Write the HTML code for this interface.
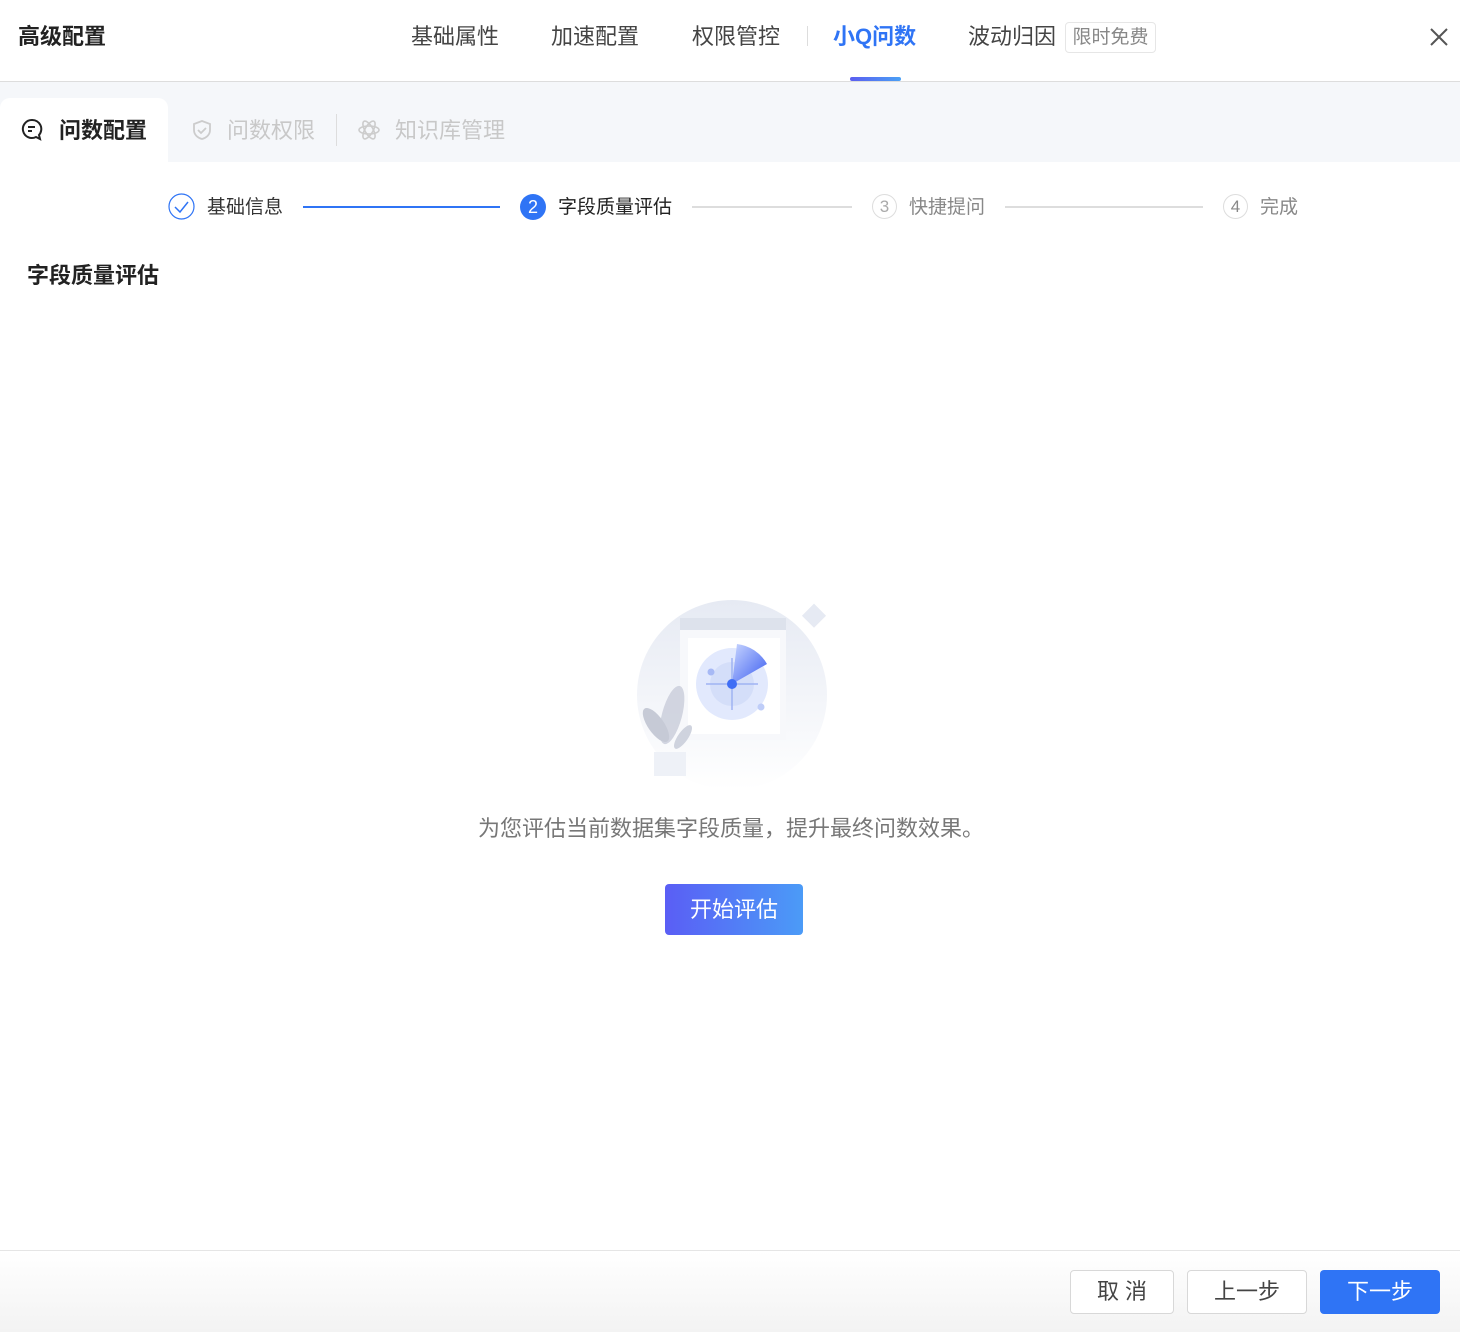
<!DOCTYPE html>
<html><head><meta charset="utf-8"><style>
*{margin:0;padding:0;box-sizing:border-box}
body{width:1460px;height:1332px;background:#fff;font-family:"Liberation Sans","Noto Sans CJK SC",sans-serif;position:relative;overflow:hidden;color:#333}
.a{position:absolute;white-space:nowrap}
</style></head><body>
<div class="a" style="left:18px;top:22px;font-size:22px;font-weight:bold;color:#222;line-height:30px">高级配置</div>
<div class="a" style="left:411px;top:22px;font-size:22px;color:#444;line-height:30px">基础属性</div>
<div class="a" style="left:551px;top:22px;font-size:22px;color:#444;line-height:30px">加速配置</div>
<div class="a" style="left:692px;top:22px;font-size:22px;color:#444;line-height:30px">权限管控</div>
<div class="a" style="left:807px;top:26px;width:1px;height:20px;background:#ddd"></div>
<div class="a" style="left:833px;top:22px;font-size:22px;color:#2f74f5;line-height:30px;font-weight:bold">小Q问数</div>
<div class="a" style="left:850px;top:77px;width:51px;height:4px;border-radius:2px;background:linear-gradient(90deg,#5b5ef0,#4aa0f5)"></div>
<div class="a" style="left:968px;top:22px;font-size:22px;color:#444;line-height:30px">波动归因</div>
<div class="a" style="left:1065px;top:22px;width:91px;height:31px;border:1px solid #e6e6e6;border-radius:4px;font-size:19px;color:#888;line-height:29px;text-align:center">限时免费</div>
<svg class="a" style="left:1428px;top:26px" width="22" height="22" viewBox="0 0 22 22"><path d="M3 3L19 19M19 3L3 19" stroke="#555" stroke-width="2"/></svg>
<div class="a" style="left:0;top:81px;width:1460px;height:1px;background:#ddd"></div>
<div class="a" style="left:0;top:82px;width:1460px;height:80px;background:#f5f7fa"></div>
<div class="a" style="left:0;top:98px;width:168px;height:64px;background:#fff;border-radius:10px 10px 0 0"></div>
<svg class="a" style="left:20px;top:117px" width="26" height="26" viewBox="0 0 26 26"><path d="M12 3a9 9 0 1 0 4 17l4 2-1-4a9 9 0 0 0-7-15z" fill="none" stroke="#222" stroke-width="2"/><path d="M8 10h7M8 14h4" stroke="#222" stroke-width="2"/></svg>
<div class="a" style="left:59px;top:116px;font-size:22px;font-weight:bold;color:#222;line-height:30px">问数配置</div>
<svg class="a" style="left:191px;top:119px" width="22" height="22" viewBox="0 0 22 22"><path d="M11 2l8 3v6c0 5-4 8-8 9-4-1-8-4-8-9V5z" fill="none" stroke="#ccc" stroke-width="1.8"/><path d="M7 11l3 3 5-5" fill="none" stroke="#ccc" stroke-width="1.8"/></svg>
<div class="a" style="left:227px;top:116px;font-size:22px;color:#c8c8c8;line-height:30px">问数权限</div>
<div class="a" style="left:336px;top:114px;width:1px;height:32px;background:#ddd"></div>
<svg class="a" style="left:357px;top:118px" width="24" height="24" viewBox="0 0 24 24" fill="none" stroke="#ccc" stroke-width="1.6"><ellipse cx="12" cy="12" rx="10" ry="4"/><ellipse cx="12" cy="12" rx="10" ry="4" transform="rotate(60 12 12)"/><ellipse cx="12" cy="12" rx="10" ry="4" transform="rotate(-60 12 12)"/></svg>
<div class="a" style="left:395px;top:116px;font-size:22px;color:#c8c8c8;line-height:30px">知识库管理</div>
<svg class="a" style="left:168px;top:193px" width="27" height="27" viewBox="0 0 27 27"><circle cx="13.5" cy="13.5" r="12.5" fill="none" stroke="#2f74f5" stroke-width="1.2"/><path d="M7 14l5 5 8-10" fill="none" stroke="#2f74f5" stroke-width="1.5"/></svg>
<div class="a" style="left:207px;top:194px;font-size:19px;color:#333;line-height:27px">基础信息</div>
<div class="a" style="left:303px;top:206px;width:197px;height:2px;background:#2f74f5"></div>
<div class="a" style="left:520px;top:194px;width:26px;height:26px;border-radius:50%;background:#2f74f5;color:#fff;font-size:18px;text-align:center;line-height:26px">2</div>
<div class="a" style="left:558px;top:194px;font-size:19px;color:#222;line-height:27px">字段质量评估</div>
<div class="a" style="left:692px;top:206px;width:160px;height:2px;background:#ddd"></div>
<div class="a" style="left:872px;top:194px;width:25px;height:25px;border-radius:50%;border:1px solid #ddd;color:#aaa;font-size:17px;text-align:center;line-height:23px">3</div>
<div class="a" style="left:909px;top:194px;font-size:19px;color:#888;line-height:27px">快捷提问</div>
<div class="a" style="left:1005px;top:206px;width:198px;height:2px;background:#ddd"></div>
<div class="a" style="left:1223px;top:194px;width:25px;height:25px;border-radius:50%;border:1px solid #ddd;color:#888;font-size:17px;text-align:center;line-height:23px">4</div>
<div class="a" style="left:1260px;top:194px;font-size:19px;color:#888;line-height:27px">完成</div>
<div class="a" style="left:27px;top:261px;font-size:22px;font-weight:bold;color:#222;line-height:30px">字段质量评估</div>
<svg class="a" style="left:620px;top:590px" width="230" height="200" viewBox="0 0 230 200">
<defs><linearGradient id="bg" x1="0" y1="0" x2="0" y2="1"><stop offset="0" stop-color="#e6eaf3"/><stop offset="1" stop-color="#fff"/></linearGradient>
<linearGradient id="sw" x1="0" y1="0" x2="1" y2="1"><stop offset="0" stop-color="#c9d6ff"/><stop offset="1" stop-color="#3a5cf0"/></linearGradient></defs>
<circle cx="112" cy="105" r="95" fill="url(#bg)"/>
<rect x="186" y="17" width="17" height="17" fill="#e6eaf3" transform="rotate(45 194 25)"/>
<rect x="60" y="28" width="106" height="122" fill="#f7f8fb"/>
<rect x="60" y="28" width="106" height="12" fill="#dde2ec"/>
<rect x="68" y="48" width="92" height="96" fill="#fff"/>
<circle cx="112" cy="94" r="36" fill="#e2e9fd"/>
<circle cx="112" cy="94" r="22" fill="#d4def9"/>
<path d="M112 94L117 54A40 40 0 0 1 147 74Z" fill="url(#sw)"/>
<path d="M86 94h52M112 68v52" stroke="#9fb3f3" stroke-width="1.5"/>
<circle cx="112" cy="94" r="5" fill="#3f6ef5"/>
<circle cx="91" cy="82" r="3.5" fill="#a7b9f5"/>
<circle cx="141" cy="117" r="3.5" fill="#bfcdf8"/>
<ellipse cx="52" cy="125" rx="10" ry="30" fill="#c8ccd9" transform="rotate(15 52 125)" opacity=".8"/>
<ellipse cx="36" cy="135" rx="8" ry="20" fill="#c6cad6" transform="rotate(-35 36 135)"/>
<ellipse cx="63" cy="147" rx="5" ry="14" fill="#cfd3de" transform="rotate(35 63 147)"/>
<rect x="34" y="162" width="32" height="24" fill="#eef1f7"/>
</svg>
<div class="a" style="left:0;top:814px;width:1462px;text-align:center;font-size:22px;color:#777;line-height:30px">为您评估当前数据集字段质量，提升最终问数效果。</div>
<div class="a" style="left:665px;top:884px;width:138px;height:51px;border-radius:4px;background:linear-gradient(90deg,#5a5ef5,#4b9bf7);color:#fff;font-size:22px;text-align:center;line-height:51px">开始评估</div>
<div class="a" style="left:0;top:1250px;width:1460px;height:1px;background:#e5e5e5"></div>
<div class="a" style="left:0;top:1251px;width:1460px;height:81px;background:linear-gradient(180deg,#fff,#f3f3f3)"></div>
<div class="a" style="left:1070px;top:1270px;width:104px;height:44px;border:1px solid #d8d8d8;border-radius:4px;background:#fff;font-size:22px;color:#444;text-align:center;line-height:42px">取 消</div>
<div class="a" style="left:1187px;top:1270px;width:120px;height:44px;border:1px solid #d8d8d8;border-radius:4px;background:#fff;font-size:22px;color:#444;text-align:center;line-height:42px">上一步</div>
<div class="a" style="left:1320px;top:1270px;width:120px;height:44px;border-radius:4px;background:#2f74f5;font-size:22px;color:#fff;text-align:center;line-height:44px">下一步</div>
</body></html>
